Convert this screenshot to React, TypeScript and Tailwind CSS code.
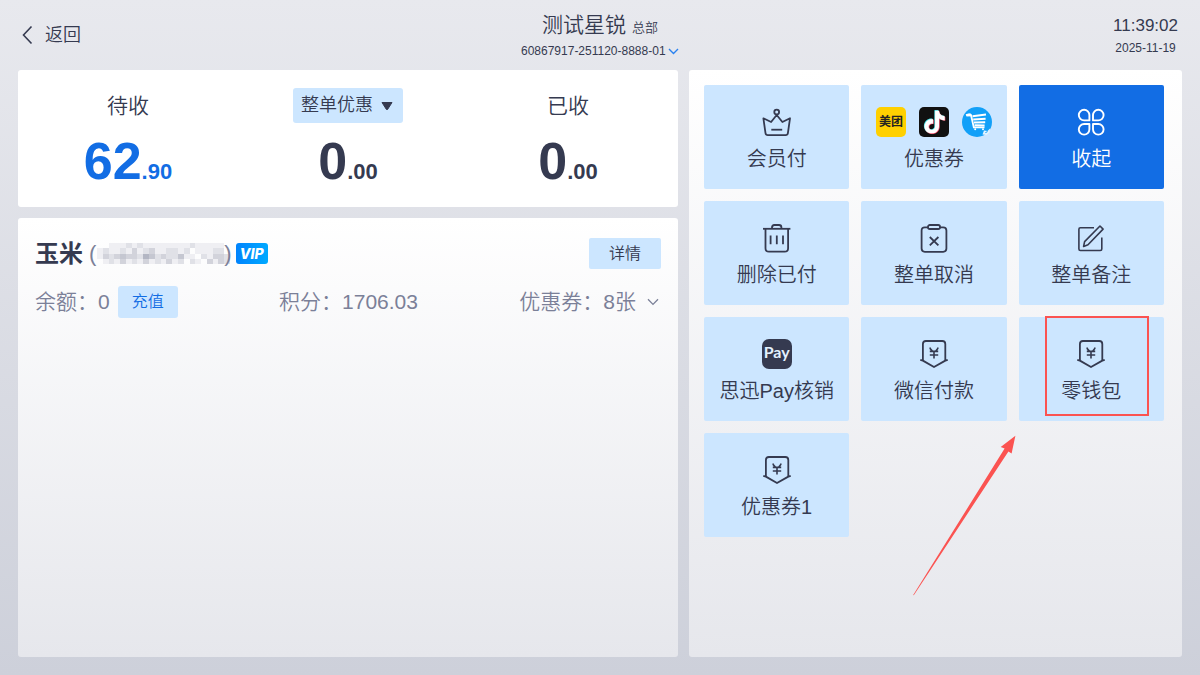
import React, { useState } from 'react';
import { SiTiktok } from 'react-icons/si';

interface IconProps {
  children: React.ReactNode;
}

const Icon: React.FC<IconProps> = ({ children }) => (
  <svg
    className="w-[30px] h-[30px]"
    viewBox="0 0 30 30"
    fill="none"
    stroke="currentColor"
    strokeWidth="1.8"
    strokeLinejoin="round"
    aria-hidden="true"
  >
    {children}
  </svg>
);

const CrownIcon = () => (
  <Icon>
    <circle cx="14.7" cy="5" r="2.4" />
    <path d="M14.7 8L20.4 15L28 11.3L25.9 26.2Q25.6 28.2 23.6 28.2H5.8Q3.8 28.2 3.5 26.2L1.4 11.3L9.1 15Z" />
    <path d="M9.3 22.7H20.2" />
  </Icon>
);

const TrashIcon = () => (
  <Icon>
    <path d="M1 5.8H28.4" />
    <path d="M10 5.6V4.4Q10 2 12.4 2H17Q19.4 2 19.4 4.4V5.6" />
    <path d="M3.5 6V25.2Q3.5 28.7 7 28.7H22.6Q26.1 28.7 26.1 25.2V6" />
    <path d="M8.6 12.5V21.3M14.8 12.5V21.3M21 12.5V21.3" />
  </Icon>
);

const CancelIcon = () => (
  <Icon>
    <path d="M9 4.4H5.8Q2.6 4.4 2.6 7.6V25.6Q2.6 28.8 5.8 28.8H24.2Q27.4 28.8 27.4 25.6V7.6Q27.4 4.4 24.2 4.4H21" />
    <rect x="9" y="2" width="12" height="4" rx="1.8" />
    <path d="M10.8 14L19.4 22.4M19.4 14L10.8 22.4" />
  </Icon>
);

const NoteIcon = () => (
  <Icon>
    <path d="M18 4.8H4.4Q2.9 4.8 2.9 6.3V26Q2.9 27.5 4.4 27.5H24.3Q25.8 27.5 25.8 26V14.6" strokeWidth="1.6" />
    <path d="M7.6 23.5L8.6 18.6L24 3L27.1 6.1L12 21.8Z" strokeWidth="1.6" />
  </Icon>
);

const CloverIcon = () => (
  <Icon>
    <g strokeWidth="1.9">
      <path d="M13.4 13.4V8.1A5.3 5.3 0 1 0 8.1 13.4Z" />
      <path d="M17 13.4V8.1A5.3 5.3 0 1 1 22.3 13.4Z" />
      <path d="M13.4 17V22.3A5.3 5.3 0 1 1 8.1 17Z" />
      <path d="M17 17V22.3A5.3 5.3 0 1 0 22.3 17Z" />
    </g>
  </Icon>
);

const YuanIcon = () => (
  <Icon>
    <path d="M3.9 21.6V5Q3.9 2 6.9 2H23.3Q26.3 2 26.3 5V21.6" />
    <path d="M1.3 20.8L3.9 21.6L15 28L26.3 21.6L28.7 20.8" />
    <path d="M11.2 8.6V9.6L13.6 12.2H16.6L18.8 9.6V8.6M10.8 12.4H19.2M15 12.2V19.6M10.8 16H19.2" strokeWidth="1.6" />
  </Icon>
);

const PayIcon = () => (
  <span className="flex w-[30px] h-[30px] items-center justify-center rounded-[7px] bg-[#353a50] pb-1 font-[Lato] text-[16px] leading-4 font-bold text-[#e3f1ff]">
    Pay
  </span>
);

const CouponIcons = () => (
  <span className="flex gap-[13px]">
    <span className="flex w-[30px] h-[30px] items-center justify-center rounded-[5px] bg-[#ffd000] text-[12px] leading-3 font-bold text-[#222]">
      美团
    </span>
    <svg className="w-[30px] h-[30px]" viewBox="0 0 30 30" aria-hidden="true">
      <rect width="30" height="30" rx="5" fill="#111" />
      <SiTiktok x="3.4" y="3" size="23" color="#35d9df" />
      <SiTiktok x="4.8" y="4.2" size="23" color="#ef3b58" />
      <SiTiktok x="4.1" y="3.6" size="23" color="#fff" stroke="#fff" strokeWidth="0.4" />
    </svg>
    <svg className="w-[30px] h-[30px]" viewBox="0 0 30 30" aria-hidden="true">
      <circle cx="15" cy="15" r="15" fill="#12a0f8" />
      <path d="M4.3 8.3Q7 6.7 9 8L11.8 20.3H22.5" fill="none" stroke="#fff" strokeWidth="1.8" />
      <path d="M3.7 7.2L8.6 6.4L10 9.2L4.6 9.6Z" fill="#fff" />
      <path d="M10.5 9.2L24 7.6M11.2 12.6L23.6 11.7M12 15.6L23.2 15.3M12.6 18.2L22.6 18.5" stroke="#fff" strokeWidth="2" />
      <circle cx="13.2" cy="22.3" r="1" fill="#fff" />
      <circle cx="21" cy="22.3" r="1" fill="#fff" />
      <path d="M20.5 27.6L22 23.5L25.5 24L28.3 21.3L27.4 25.4L24.4 28Z" fill="#e3f3ff" />
      <path d="M23.4 25.6L25.6 24.6" stroke="#12a0f8" strokeWidth="1" />
    </svg>
  </span>
);

interface Action {
  label: string;
  icon: React.ReactNode;
  primary?: boolean;
  marked?: boolean;
}

const actions: Action[] = [
  { label: '会员付', icon: <CrownIcon /> },
  { label: '优惠券', icon: <CouponIcons /> },
  { label: '收起', icon: <CloverIcon />, primary: true },
  { label: '删除已付', icon: <TrashIcon /> },
  { label: '整单取消', icon: <CancelIcon /> },
  { label: '整单备注', icon: <NoteIcon /> },
  { label: '思迅Pay核销', icon: <PayIcon /> },
  { label: '微信付款', icon: <YuanIcon /> },
  { label: '零钱包', icon: <YuanIcon />, marked: true },
  { label: '优惠券1', icon: <YuanIcon /> },
];

const ActionTile: React.FC<{ action: Action }> = ({ action }) => (
  <div className="relative">
    <button
      className={`flex h-[104px] w-full flex-col items-center gap-2 rounded-[2px] pt-[22px] text-[20px] leading-7 ${
        action.primary ? 'bg-[#126de4] text-white' : 'bg-[#cce6ff] text-[#353a50]'
      }`}
    >
      {action.icon}
      <span>{action.label}</span>
    </button>
    {action.marked && (
      <>
        <div className="pointer-events-none absolute -top-px left-[26px] h-[100px] w-[104px] border-2 border-[#fb5351]" />
        <svg
          className="pointer-events-none absolute top-[118px] -left-[106px] h-[161px] w-[104px]"
          viewBox="0 0 104 161"
          aria-hidden="true"
        >
          <path d="M102.4 0.8L87.7 12L91.6 13.6L0.2 160L0.8 160.2L95.4 16.6L98.6 18.6Z" fill="#fb5351" />
        </svg>
      </>
    )}
  </div>
);

// Shades of the masked phone number, one digit per cell, 0 is clear
const maskRows = [
  '00111212111111112111110',
  '12112131231122120111220',
  '13234332542322411021332',
  '01213121312131202103132',
];
const maskShades = ['none', '#efeff3', '#e0e1e7', '#d2d3db', '#c5c7d1', '#b3b6c3'];

const PhoneMask = () => (
  <svg className="ml-px h-[21px] w-[133px]" viewBox="0 0 138 24" preserveAspectRatio="none" shapeRendering="crispEdges" aria-hidden="true">
    {maskRows.map((row, y) =>
      row.split('').map((shade, x) => (
        <rect key={`${x}-${y}`} x={x * 6} y={y * 6} width="6" height="6" fill={maskShades[Number(shade)]} />
      ))
    )}
  </svg>
);

interface AmountProps {
  whole: string;
  cents: string;
  className?: string;
  children: React.ReactNode;
}

const Amount: React.FC<AmountProps> = ({ whole, cents, className = '', children }) => (
  <div className="flex flex-col items-center">
    <div className="flex h-[35px] items-center text-[21px]">{children}</div>
    <div className={`mt-2 text-[22px] leading-[60px] font-bold ${className}`}>
      <span className="text-[52px]">{whole}</span>.{cents}
    </div>
  </div>
);

const App: React.FC = () => {
  const [store, setStore] = useState('60867917-251120-8888-01');
  const [discount, setDiscount] = useState('整单优惠');

  return (
    <div className="flex min-h-screen flex-col bg-linear-to-b from-[#e8e9ee] to-[#cdd0da] font-['Liberation_Sans','Noto_Sans_CJK_SC',sans-serif] font-[350] text-[#353a50]">
      {/* Header */}
      <header className="grid h-[70px] grid-cols-3 px-[22px]">
        <button className="flex items-center gap-3 justify-self-start text-[18px]">
          <svg className="h-5 w-[11px]" viewBox="0 0 11 20" fill="none" stroke="currentColor" strokeWidth="1.6" aria-hidden="true">
            <path d="M9.5 1.5L1.5 10L9.5 18.5" />
          </svg>
          返回
        </button>
        <div className="flex flex-col items-center pt-3">
          <h1 className="text-[21px] leading-[26px]">
            测试星锐 <span className="text-[13px]">总部</span>
          </h1>
          <div className="relative">
            <select
              aria-label="单号"
              value={store}
              onChange={(e) => setStore(e.target.value)}
              className="block appearance-none bg-transparent pr-[13px] text-[12px] leading-5"
            >
              <option>60867917-251120-8888-01</option>
            </select>
            <svg
              className="pointer-events-none absolute top-[7px] right-0 h-[7px] w-[11px]"
              viewBox="0 0 11 7"
              fill="none"
              stroke="#2a82f0"
              strokeWidth="1.4"
              aria-hidden="true"
            >
              <path d="M1 1L5.5 5.5L10 1" />
            </svg>
          </div>
        </div>
        <div className="flex flex-col items-center justify-self-end pt-[14px]">
          <time className="text-[17px] leading-6">11:39:02</time>
          <time className="text-[12px] leading-5">2025-11-19</time>
        </div>
      </header>

      <main className="grid flex-1 grid-cols-[660fr_493fr] gap-[11px] px-[18px] pb-[18px]">
        <div className="flex flex-col gap-[11px]">
          {/* Totals */}
          <section className="grid h-[137px] grid-cols-3 rounded-[3px] bg-white pt-[18px]">
            <Amount whole="62" cents="90" className="text-[#126de4]">
              待收
            </Amount>
            <Amount whole="0" cents="00">
              <div className="relative text-[18px]">
                <select
                  aria-label="优惠方式"
                  value={discount}
                  onChange={(e) => setDiscount(e.target.value)}
                  className="block h-[35px] appearance-none rounded-[3px] bg-[#cce6ff] pr-[30px] pl-2"
                >
                  <option>整单优惠</option>
                </select>
                <svg className="pointer-events-none absolute top-[14px] right-[10px] h-2 w-3" viewBox="0 0 12 8" aria-hidden="true">
                  <path d="M1 0.5H11L6.6 7.4Q6 8 5.4 7.4Z" fill="#353a50" stroke="#353a50" strokeLinejoin="round" />
                </svg>
              </div>
            </Amount>
            <Amount whole="0" cents="00">
              已收
            </Amount>
          </section>

          {/* Member */}
          <section className="flex-1 rounded-[3px] bg-linear-to-b from-white to-[#e6e7ec] px-[17px] pt-5">
            <div className="flex h-[31px] items-center">
              <h2 className="text-[24px] font-bold">玉米</h2>
              <div className="ml-[6px] flex items-center text-[22px] text-[#7b8098]">
                (
                <PhoneMask />
                <span className="-ml-[6px]">)</span>
              </div>
              <span className="ml-1 flex h-[21px] w-8 items-center justify-center rounded-[3px] bg-linear-to-r from-[#0083fd] to-[#00a9ff] font-[Inter] text-[14px] font-extrabold text-white italic">
                VIP
              </span>
              <button className="ml-auto h-[31px] w-[72px] rounded-[2px] bg-[#cce6ff] text-[16px]">详情</button>
            </div>
            <div className="mt-[17px] flex h-8 items-center justify-between pr-[2px] text-[21px] text-[#7b8098]">
              <div className="flex items-center">
                余额：0
                <button className="ml-2 h-8 w-[60px] rounded-[3px] bg-[#cce6ff] text-[16px] text-[#126de4]">充值</button>
              </div>
              <div>积分：1706.03</div>
              <button className="flex items-center gap-[11px]">
                优惠券：8张
                <svg className="h-2 w-3" viewBox="0 0 12 8" fill="none" stroke="currentColor" strokeWidth="1.3" aria-hidden="true">
                  <path d="M1 1.2L6 6.4L11 1.2" />
                </svg>
              </button>
            </div>
          </section>
        </div>

        {/* Actions */}
        <section className="rounded-[3px] bg-linear-to-b from-white to-[#e6e7ec] pt-[15px] pr-[18px] pl-[15px]">
          <div className="grid grid-cols-3 gap-3">
            {actions.map((action) => (
              <ActionTile key={action.label} action={action} />
            ))}
          </div>
        </section>
      </main>
    </div>
  );
};

export default App;
